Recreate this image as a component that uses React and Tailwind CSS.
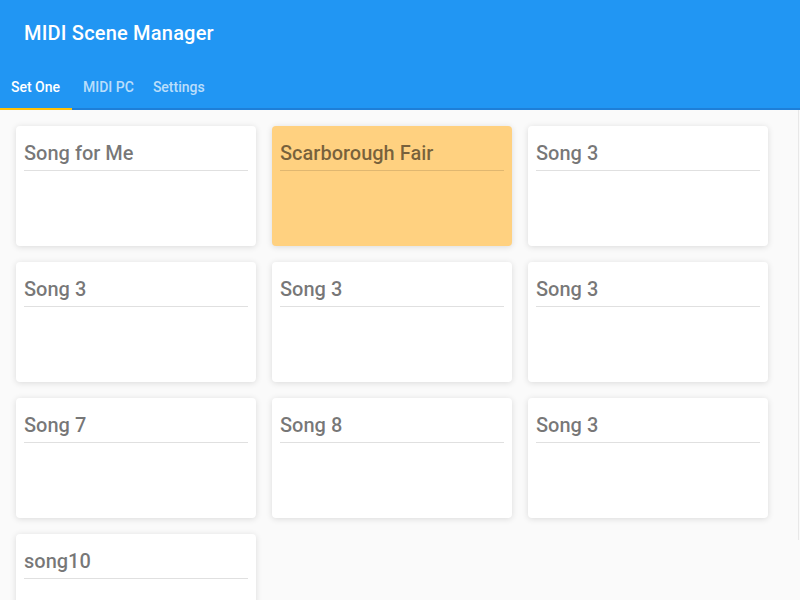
import React from "react";

const songs = [
  "Song for Me",
  "Scarborough Fair",
  "Song 3",
  "Song 3",
  "Song 3",
  "Song 3",
  "Song 7",
  "Song 8",
  "Song 3",
  "song10",
];

function Card({ title, active }) {
  return (
    <div
      className={
        "h-[120px] rounded-[4px] p-2 shadow-[0_1px_6px_rgba(0,0,0,0.13)] " +
        (active ? "bg-[#ffd180]" : "bg-white")
      }
    >
      <div className="mt-[5px] pb-[3px] border-b border-black/[0.12] text-[20px] font-medium leading-7 text-black/[0.54] whitespace-nowrap">
        {title}
      </div>
    </div>
  );
}

export default function App() {
  return (
    <div
      className="min-h-screen bg-[#fafafa]"
      style={{ fontFamily: "Roboto, 'Noto Sans', sans-serif" }}
    >
      <header className="bg-[#2196f3]">
        <div className="h-16 flex items-center px-6 pt-[2px]">
          <h1 className="text-[20px] font-medium text-white leading-7 tracking-[0.01em]">
            MIDI Scene Manager
          </h1>
        </div>
        <div className="h-[46px] flex items-stretch border-b-2 border-[#1e7fd8] pt-[2px]">
          <div className="relative w-[72px] pl-[11px] flex items-center text-[14px] font-medium text-white">
            Set One
            <span className="absolute left-0 right-0 bottom-[-2px] h-[2px] bg-[#ffc107]" />
          </div>
          <div className="pl-[11px] flex items-center text-[14px] font-medium text-white/70">
            MIDI PC
          </div>
          <div className="pl-[19px] flex items-center text-[14px] font-medium text-white/70">
            Settings
          </div>
        </div>
      </header>
      <main className="p-4">
        <div className="grid grid-cols-[240px_240px_240px] gap-4">
          {songs.map((s, i) => (
            <Card key={i} title={s} active={i === 1} />
          ))}
        </div>
      </main>
      <div className="fixed right-[1px] top-[110px] h-[430px] w-[1px] bg-[#e8e8e8]" />
    </div>
  );
}
